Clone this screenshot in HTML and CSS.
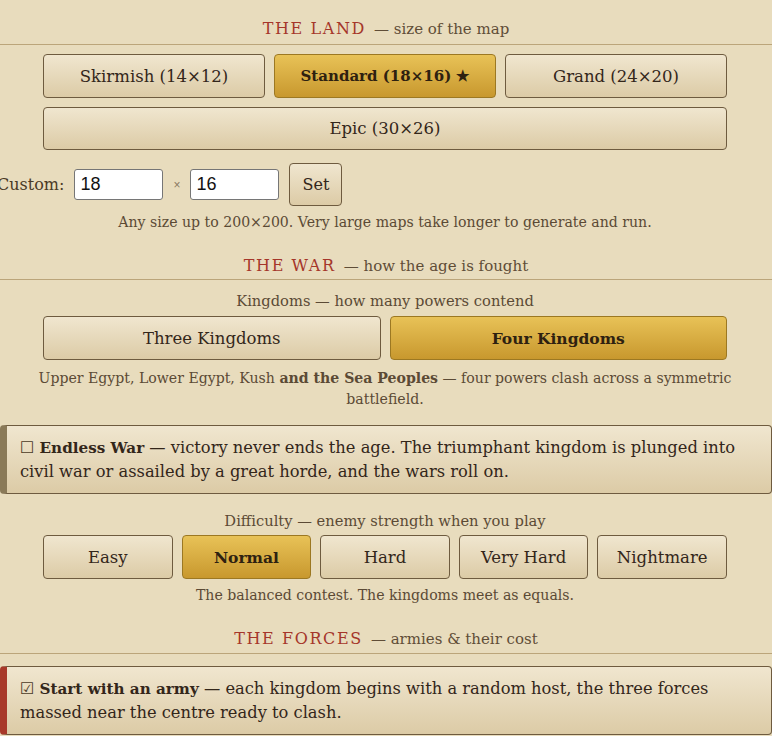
FILE: index.html
```html
<!DOCTYPE html>
<html>
<head>
<meta charset="utf-8">
<link rel="stylesheet" href="styles.css">
</head>
<body>
<div class="panel">
  <div class="sec-head"><span class="sec-title">THE LAND</span> <span class="sec-sub">— size of the map</span></div>
  <div class="grid3">
    <button class="btn">Skirmish (14×12)</button>
    <button class="btn sel">Standard (18×16) ★</button>
    <button class="btn">Grand (24×20)</button>
    <button class="btn span3">Epic (30×26)</button>
  </div>
  <div class="custom">
    <span class="clabel">Custom:</span>
    <input class="num" type="text" value="18">
    <span class="times">×</span>
    <input class="num" type="text" value="16">
    <button class="btn setbtn">Set</button>
  </div>
  <p class="help first">Any size up to 200×200. Very large maps take longer to generate and run.</p>

  <div class="sec-head war"><span class="sec-title">THE WAR</span> <span class="sec-sub">— how the age is fought</span></div>
  <p class="sublabel">Kingdoms — how many powers contend</p>
  <div class="grid2">
    <button class="btn">Three Kingdoms</button>
    <button class="btn sel">Four Kingdoms</button>
  </div>
  <p class="help desc">Upper Egypt, Lower Egypt, Kush <b>and the Sea Peoples</b> — four powers clash across a symmetric battlefield.</p>

  <div class="card grey"><span class="box">☐</span> <b>Endless War</b> — victory never ends the age. The triumphant kingdom is plunged into civil war or assailed by a great horde, and the wars roll on.</div>

  <p class="sublabel diff">Difficulty — enemy strength when you play</p>
  <div class="grid5">
    <button class="btn">Easy</button>
    <button class="btn sel">Normal</button>
    <button class="btn">Hard</button>
    <button class="btn">Very Hard</button>
    <button class="btn">Nightmare</button>
  </div>
  <p class="help last">The balanced contest. The kingdoms meet as equals.</p>

  <div class="sec-head forces"><span class="sec-title">THE FORCES</span> <span class="sec-sub">— armies &amp; their cost</span></div>
  <div class="card red"><span class="box">☑</span> <b>Start with an army</b> — each kingdom begins with a random host, the three forces massed near the centre ready to clash.</div>
</div>
</body>
</html>
```
FILE: styles.css
```css
html, body {
  margin: 0;
  padding: 0;
  background: #e8dcbd;
  overflow: hidden;
}
body {
  font-family: "DejaVu Serif", serif;
  color: #3a2c1b;
}
.panel {
  width: 772px;
  box-sizing: border-box;
  padding: 19px 45px 0 43px;
}
.sec-head {
  margin: 0 -45px 0 -43px;
  text-align: center;
  border-bottom: 1px solid #bba57a;
  padding-bottom: 5px;
  line-height: 20px;
}
.sec-title {
  color: #a5362a;
  font-size: 16px;
  letter-spacing: 1.6px;
}
.sec-sub {
  color: #5f4d37;
  font-size: 15px;
  margin-left: 3px;
}
.btn {
  font-family: "DejaVu Serif", serif;
  font-size: 16.5px;
  color: #33261a;
  background: linear-gradient(#f0e6cf, #dccba6);
  border: 1px solid #6e5b3f;
  border-radius: 4px;
  height: 44px;
  padding: 0;
  cursor: pointer;
}
.btn.sel {
  background: linear-gradient(#e8c257, #c8982e);
  border-color: #9c7822;
  font-weight: bold;
  font-size: 15.5px;
  color: #2e2110;
}
.grid3 .btn.sel { font-size: 15px; }
.grid3 {
  margin-top: 9px;
  display: grid;
  grid-template-columns: repeat(3, 1fr);
  gap: 9px;
}
.span3 {
  grid-column: 1 / 4;
  height: 43px;
}
.grid2 {
  display: grid;
  grid-template-columns: 1fr 1fr;
  gap: 9px;
  margin-top: 5px;
}
.grid5 {
  display: grid;
  grid-template-columns: repeat(5, 1fr);
  gap: 9px;
  margin-top: 4px;
}
.custom {
  display: flex;
  align-items: center;
  margin: 13px 0 0 -46px;
  height: 43px;
}
.clabel {
  font-size: 16px;
  color: #4a3a26;
  margin-right: 10px;
}
.num {
  width: 89px;
  height: 31px;
  box-sizing: border-box;
  border: 1px solid #767676;
  border-radius: 3px;
  background: #fff;
  font-family: "Liberation Sans", Arial, sans-serif;
  font-size: 18px;
  padding: 0 5px;
  color: #111;
}
.times {
  font-size: 12px;
  color: #8a7a62;
  margin: 0 10px;
  font-family: "Liberation Sans", sans-serif;
}
.setbtn {
  width: 53px;
  height: 43px;
  margin-left: 10px;
  font-size: 16px;
}
.help {
  margin: 5px 0 0;
  text-align: center;
  font-size: 14.1px;
  line-height: 21px;
  color: #5b4a35;
}
.help.first { margin-top: 6px; }
.sec-head.war { margin-top: 23px; padding-bottom: 3px; }
.sublabel {
  margin: 10px 0 0;
  text-align: center;
  font-size: 14.7px;
  line-height: 21px;
  color: #5b4a35;
}
.help.desc {
  margin: 8px -30px 0;
}
.help.last { margin-top: 6px; }
.card {
  margin: 15px -45px 0 -43px;
  background: linear-gradient(#f0e6cf, #dccba6);
  border: 1px solid #6e5b3f;
  border-radius: 4px;
  padding: 10px 14px 10px 13px;
  font-size: 16.3px;
  line-height: 23px;
  color: #33261a;
}
.card.grey { border-left: 7px solid #8a7a58; }
.card.red { border-left: 7px solid #a8392a; }
.card b { font-weight: bold; font-size: 15.2px; }
.box { font-family: "DejaVu Sans", sans-serif; font-size: 16px; color: #4a3a26; }
.diff { margin-top: 16px; }
.sec-head.forces { margin-top: 23px; padding-bottom: 4px; }
.sec-head.forces + .card { margin-top: 12px; }
```
